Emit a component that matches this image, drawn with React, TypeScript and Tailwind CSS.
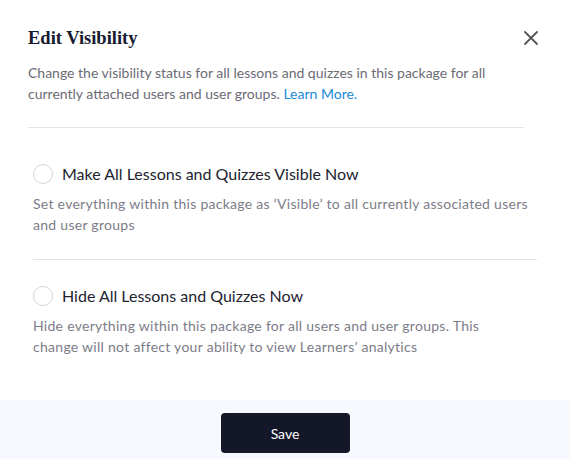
import React, { useState } from 'react';

type Option = { id: string; label: string; hint: string; hintWidth: string };

const options: Option[] = [
  {
    id: 'show',
    label: 'Make All Lessons and Quizzes Visible Now',
    hint: 'Set everything within this package as \u2018Visible\u2019 to all currently associated users and user groups',
    hintWidth: 'max-w-none',
  },
  {
    id: 'hide',
    label: 'Hide All Lessons and Quizzes Now',
    hint: 'Hide everything within this package for all users and user groups. This change will not affect your ability to view Learners\u2019 analytics',
    hintWidth: 'max-w-[465px]',
  },
];

export default function App() {
  const [selected, setSelected] = useState<string | null>(null);

  return (
    <div className="w-[570px] h-[459px] bg-white flex flex-col font-['Lato',sans-serif]">
      <div className="pl-7 pr-[31px] pt-[26px]">
        <div className="flex items-center justify-between h-6">
          <h1 className="text-[18.5px] leading-6 font-bold text-[#171a2f] font-['Liberation_Serif',serif]">
            Edit Visibility
          </h1>
          <button className="w-[16px] h-[16px] flex items-center justify-center text-[#555555]">
            <svg width="16" height="16" viewBox="0 0 16 16" fill="none" stroke="currentColor" strokeWidth="1.8" strokeLinecap="round">
              <path d="M2 2 L14 14 M14 2 L2 14" />
            </svg>
          </button>
        </div>
        <p className="mt-[12px] text-[14px] leading-[21px] text-[#6b6b76] pr-[15px]">
          Change the visibility status for all lessons and quizzes in this package for all currently attached users and user groups.{' '}
          <a className="text-[#1a8ad6]" href="#">Learn More.</a>
        </p>
        <div className="mt-[23px] mr-[15px] h-px bg-[#e4e4e4]" />
      </div>

      <div className="px-[33px] pt-[34px]">
        {options.map((o, i) => (
          <div key={o.id}>
            {i > 0 && <div className="h-px bg-[#e4e4e4] mt-[24px] mb-[24px]" />}
            <label className="flex items-center gap-[9px] h-6 cursor-pointer" onClick={() => setSelected(o.id)}>
              <span className="w-[20px] h-[20px] rounded-full border border-[#d4d4d8] bg-white flex items-center justify-center">
                {selected === o.id && <span className="w-[10px] h-[10px] rounded-full bg-[#141729]" />}
              </span>
              <span className="text-[16px] text-[#22232f]">{o.label}</span>
            </label>
            <p className={`mt-[7px] text-[14px] leading-[21px] tracking-[0.02em] text-[#7c7c88] ${o.hintWidth}`}>{o.hint}</p>
          </div>
        ))}
      </div>

      <div className="mt-auto h-[59px] bg-[#f6f9fd] flex justify-center pt-[13px]">
        <button className="w-[129px] h-[40px] rounded-[4px] bg-[#141729] text-white text-[14px]">
          Save
        </button>
      </div>
    </div>
  );
}
